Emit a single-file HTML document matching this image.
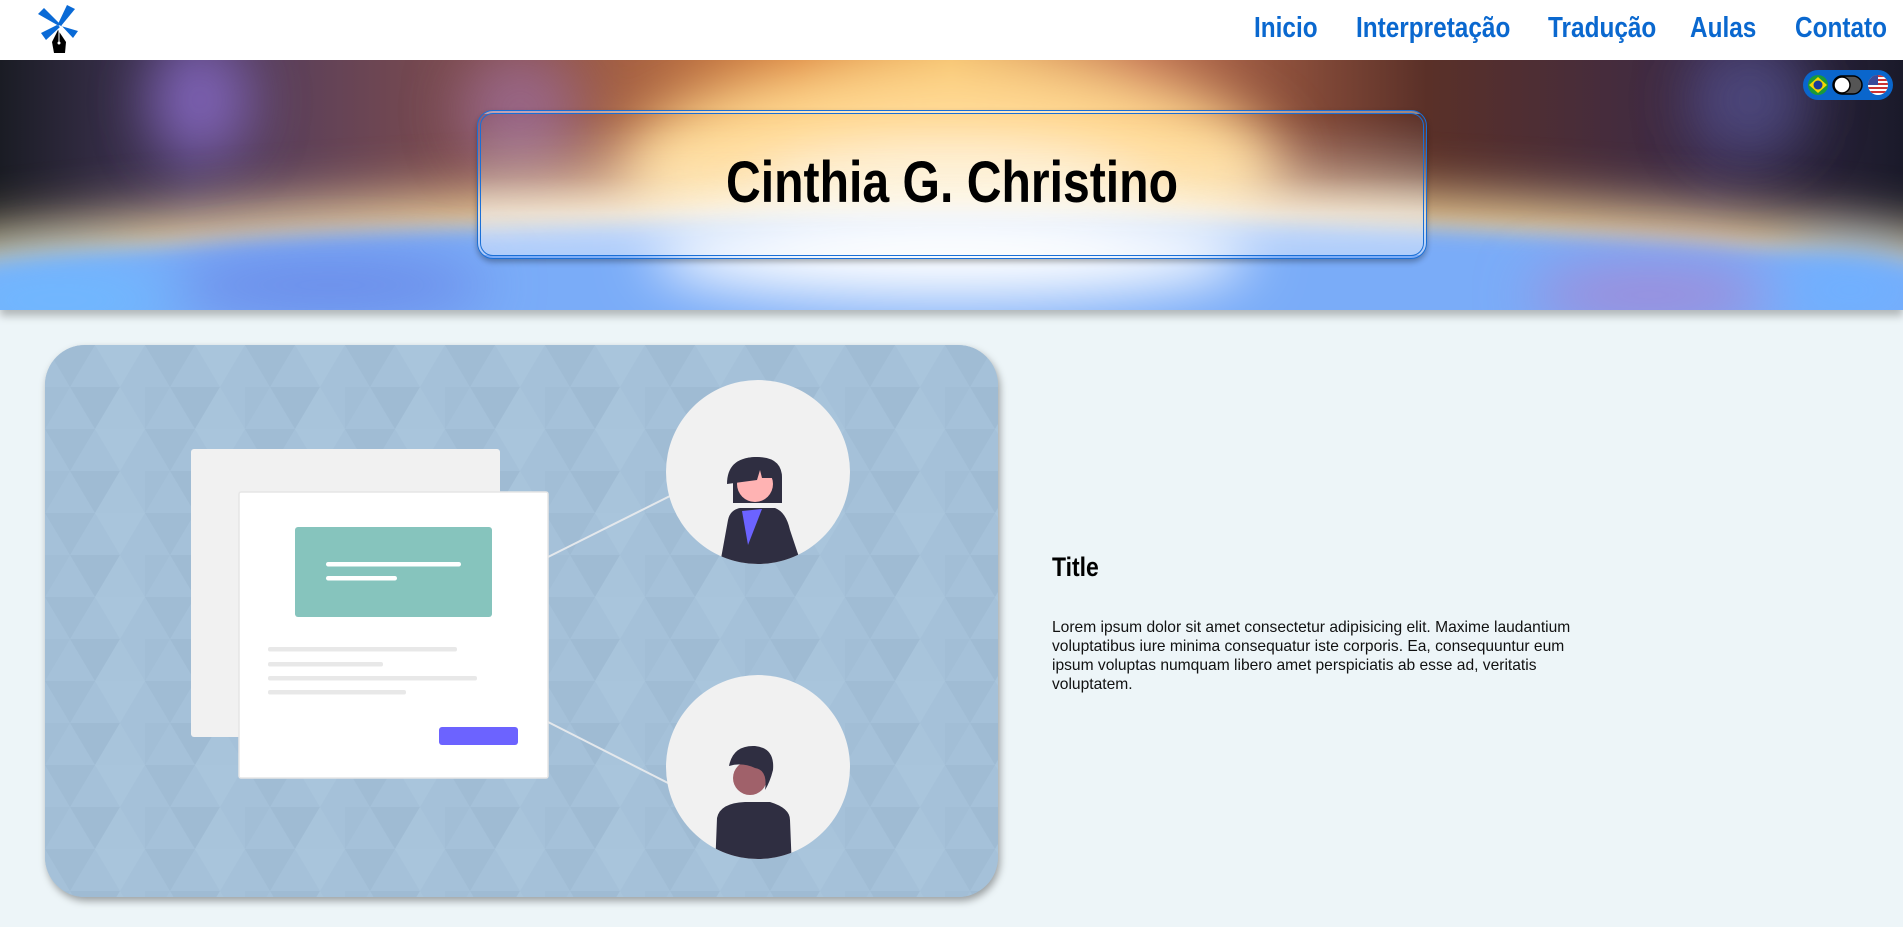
<!DOCTYPE html>
<html><head><meta charset="utf-8">
<style>
*{margin:0;padding:0;box-sizing:border-box}
html,body{width:1903px;height:927px;overflow:hidden;background:#edf5f8;font-family:"Liberation Sans",sans-serif}
header{position:absolute;left:0;top:0;width:1903px;height:60px;background:#fff;z-index:3}
nav a{position:absolute;top:12px;font-weight:bold;font-size:29px;color:#0a68cf;text-decoration:none;transform:scaleX(.84);transform-origin:left top;white-space:nowrap}
.hero{position:absolute;left:0;top:60px;width:1903px;height:250px;overflow:hidden;box-shadow:0 6px 8px rgba(0,0,0,.25);z-index:2}
.tbox{position:absolute;left:477px;top:110px;width:950px;height:149px;border:4px double #1a6fd6;border-radius:16px;background:linear-gradient(#fff0 0%,rgba(255,255,255,.25) 45%,rgba(255,255,255,.55) 70%,rgba(255,255,255,.4));box-shadow:0 3px 6px rgba(0,0,0,.3);z-index:4}
.tbox h1{position:absolute;left:0;width:100%;top:36px;text-align:center;font-weight:bold;font-size:58px;line-height:66px;color:#000;transform:scaleX(.83)}
.pill{position:absolute;left:1803px;top:70px;width:90px;height:30px;background:#0a66cc;border-radius:15px;z-index:5}
.card{position:absolute;left:45px;top:345px;width:953px;height:552px;border-radius:40px;overflow:hidden;box-shadow:2px 4px 8px rgba(0,0,0,.35);background:#a5c1d9}
h2{position:absolute;left:1052px;top:552px;font-weight:bold;font-size:27px;color:#000;transform:scaleX(.85);transform-origin:left top}
p{position:absolute;left:1052px;top:618px;font-size:15.6px;line-height:19px;color:#111;white-space:nowrap}
</style></head><body>
<header>
<svg width="90" height="60" style="position:absolute;left:0;top:0">
<g fill="#0a6ad6">
<polygon points="59,26 38,14 44,8 60,24"/>
<polygon points="58,24 67,5 75,9 61,26"/>
<polygon points="57,25 41,33 46,40 60,27"/>
<polygon points="60,24 73,38 78,31 61,26"/>
</g>
<path d="M58,30 L52,42 L54,53 L65,53 L66,42 Z" fill="#000"/>
<line x1="59" y1="31" x2="59" y2="43" stroke="#fff" stroke-width="1"/>
<circle cx="59" cy="43" r="1.5" fill="#fff"/>
</svg>
<nav>
<a style="left:1254px">Inicio</a>
<a style="left:1356px">Interpretação</a>
<a style="left:1548px">Tradução</a>
<a style="left:1690px">Aulas</a>
<a style="left:1795px">Contato</a>
</nav>
</header>
<div class="hero">
<svg width="1903" height="250" viewBox="0 60 1903 250">
<defs>
<filter id="b1" x="-20%" y="-50%" width="140%" height="200%"><feGaussianBlur stdDeviation="28"/></filter>
<filter id="b2" x="-20%" y="-50%" width="140%" height="200%"><feGaussianBlur stdDeviation="10"/></filter>
<linearGradient id="sky" x1="0" x2="1" y1="0" y2="0">
<stop offset="0" stop-color="#1a1c24"/><stop offset=".1" stop-color="#4a3a60"/><stop offset=".28" stop-color="#8a5048"/><stop offset=".42" stop-color="#d8803a"/><stop offset=".5" stop-color="#f0b860"/><stop offset=".6" stop-color="#c07050"/><stop offset=".75" stop-color="#5a3028"/><stop offset=".9" stop-color="#3a2a48"/><stop offset="1" stop-color="#1a1a2a"/>
</linearGradient>
</defs>
<rect x="0" y="60" width="1903" height="250" fill="url(#sky)"/>
<g filter="url(#b1)">
<ellipse cx="200" cy="100" rx="50" ry="60" fill="#8a6ac8" opacity=".8"/>
<ellipse cx="520" cy="110" rx="60" ry="60" fill="#a070a0" opacity=".7"/>
<ellipse cx="1750" cy="100" rx="60" ry="60" fill="#5a5aa0" opacity=".6"/>
<ellipse cx="951" cy="170" rx="330" ry="110" fill="#ffd890"/>
<ellipse cx="951" cy="210" rx="200" ry="60" fill="#fff6e0"/>
</g>
<ellipse cx="951" cy="338" rx="1320" ry="150" fill="#f8dca0" filter="url(#b1)"/>
<ellipse cx="951" cy="362" rx="1300" ry="145" fill="#7aacf8" filter="url(#b2)"/>
<g filter="url(#b1)">
<ellipse cx="951" cy="255" rx="300" ry="45" fill="#ffffff"/>
<ellipse cx="951" cy="230" rx="200" ry="25" fill="#ffffff"/>
<ellipse cx="330" cy="285" rx="160" ry="30" fill="#6a8ae8"/>
<ellipse cx="1650" cy="295" rx="120" ry="30" fill="#a08ad8"/>
<ellipse cx="60" cy="300" rx="120" ry="40" fill="#70b8ff"/>
<ellipse cx="1850" cy="290" rx="80" ry="40" fill="#70b0ff"/>
</g>
</svg>
</div>
<div class="tbox"><h1>Cinthia G. Christino</h1></div>
<div class="pill">
<svg width="90" height="30">
<circle cx="15" cy="15" r="10" fill="#1a9a3a"/><polygon points="15,7 24,15 15,23 6,15" fill="#f5d800"/><circle cx="15" cy="15" r="4.5" fill="#1a3a9a"/>
<rect x="30" y="6" width="29" height="18" rx="9" fill="#555" stroke="#000" stroke-width="1.5"/>
<circle cx="39" cy="15" r="8" fill="#fff" stroke="#000" stroke-width="1.5"/>
<clipPath id="us"><circle cx="75" cy="15" r="10"/></clipPath>
<g clip-path="url(#us)"><rect x="65" y="5" width="20" height="20" fill="#fff"/>
<rect x="65" y="5" width="20" height="2" fill="#c33"/><rect x="65" y="9" width="20" height="2" fill="#c33"/><rect x="65" y="13" width="20" height="2" fill="#c33"/><rect x="65" y="17" width="20" height="2" fill="#c33"/><rect x="65" y="21" width="20" height="2" fill="#c33"/>
<rect x="65" y="5" width="10" height="10" fill="#3a4a9a"/></g>
</svg>
</div>
<div class="card">
<svg width="953" height="552" viewBox="45 345 953 552">
<defs>
<pattern id="tri" x="45" y="345" width="100" height="84" patternUnits="userSpaceOnUse">
<rect width="100" height="84" fill="#a5c1d9"/>
<polygon points="0,0 50,0 25,42" fill="#a0bcd4"/>
<polygon points="50,0 100,0 75,42" fill="#a9c5dc"/>
<polygon points="25,42 75,42 50,84" fill="#9fbbd3"/>
<polygon points="75,42 100,84 50,84" fill="#a8c4db"/>
<polygon points="0,42 25,42 0,84" fill="#a2bed6"/>
</pattern>
<clipPath id="c1"><circle cx="758" cy="472" r="92"/></clipPath>
<clipPath id="c2"><circle cx="758" cy="767" r="92"/></clipPath>
</defs>
<rect x="45" y="345" width="953" height="552" fill="url(#tri)"/>
<line x1="548" y1="557" x2="670" y2="496" stroke="#e4e8ec" stroke-width="2"/>
<line x1="548" y1="722" x2="670" y2="784" stroke="#e4e8ec" stroke-width="2"/>
<rect x="191" y="449" width="309" height="288" rx="3" fill="#f1f1f1"/>
<rect x="239" y="492" width="309" height="286" rx="2" fill="#fff" stroke="#e6e6e6" stroke-width="1.5"/>
<rect x="295" y="527" width="197" height="90" rx="3" fill="#86c4bd"/>
<rect x="326" y="562" width="135" height="4.5" rx="2.2" fill="#fff"/>
<rect x="326" y="576" width="71" height="4.5" rx="2.2" fill="#fff"/>
<g fill="#e8e8e8"><rect x="268" y="647" width="189" height="4.5" rx="2"/><rect x="268" y="662" width="115" height="4.5" rx="2"/><rect x="268" y="676" width="209" height="4.5" rx="2"/><rect x="268" y="690" width="138" height="4.5" rx="2"/></g>
<rect x="439" y="727" width="79" height="18" rx="3" fill="#6c63ff"/>
<circle cx="758" cy="472" r="92" fill="#f1f1f1"/>
<g clip-path="url(#c1)">
<path d="M733,503 L733,478 Q733,457 757,457 Q782,457 782,478 L782,503 Z" fill="#2f2e41"/>
<circle cx="755" cy="484" r="18" fill="#ffb3b3"/>
<path d="M727,484 Q727,458 755,457 Q782,458 782,478 L762,478 L760,470 L757,480 L727,484 Z" fill="#2f2e41"/>
<path d="M728,520 Q730,510 740,508 L762,508 L775,508 Q786,512 790,530 L805,575 L718,575 Z" fill="#2f2e41"/>
<polygon points="742,511 762,509 748,545" fill="#6c63ff"/>
</g>
<circle cx="758" cy="767" r="92" fill="#f1f1f1"/>
<g clip-path="url(#c2)">
<circle cx="750" cy="778" r="17" fill="#a0616a"/>
<path d="M729,766 Q733,745 755,746 Q775,748 773,770 Q770,782 765,790 Q768,770 755,768 Q742,762 729,766 Z" fill="#2f2e41"/>
<path d="M717,818 Q720,803 745,802 L770,802 Q790,808 790,820 L792,870 L715,870 Z" fill="#2f2e41"/>
</g>
</svg>
</div>
<h2>Title</h2>
<p>Lorem ipsum dolor sit amet consectetur adipisicing elit. Maxime laudantium<br>voluptatibus iure minima consequatur iste corporis. Ea, consequuntur eum<br>ipsum voluptas numquam libero amet perspiciatis ab esse ad, veritatis<br>voluptatem.</p>
</body></html>
